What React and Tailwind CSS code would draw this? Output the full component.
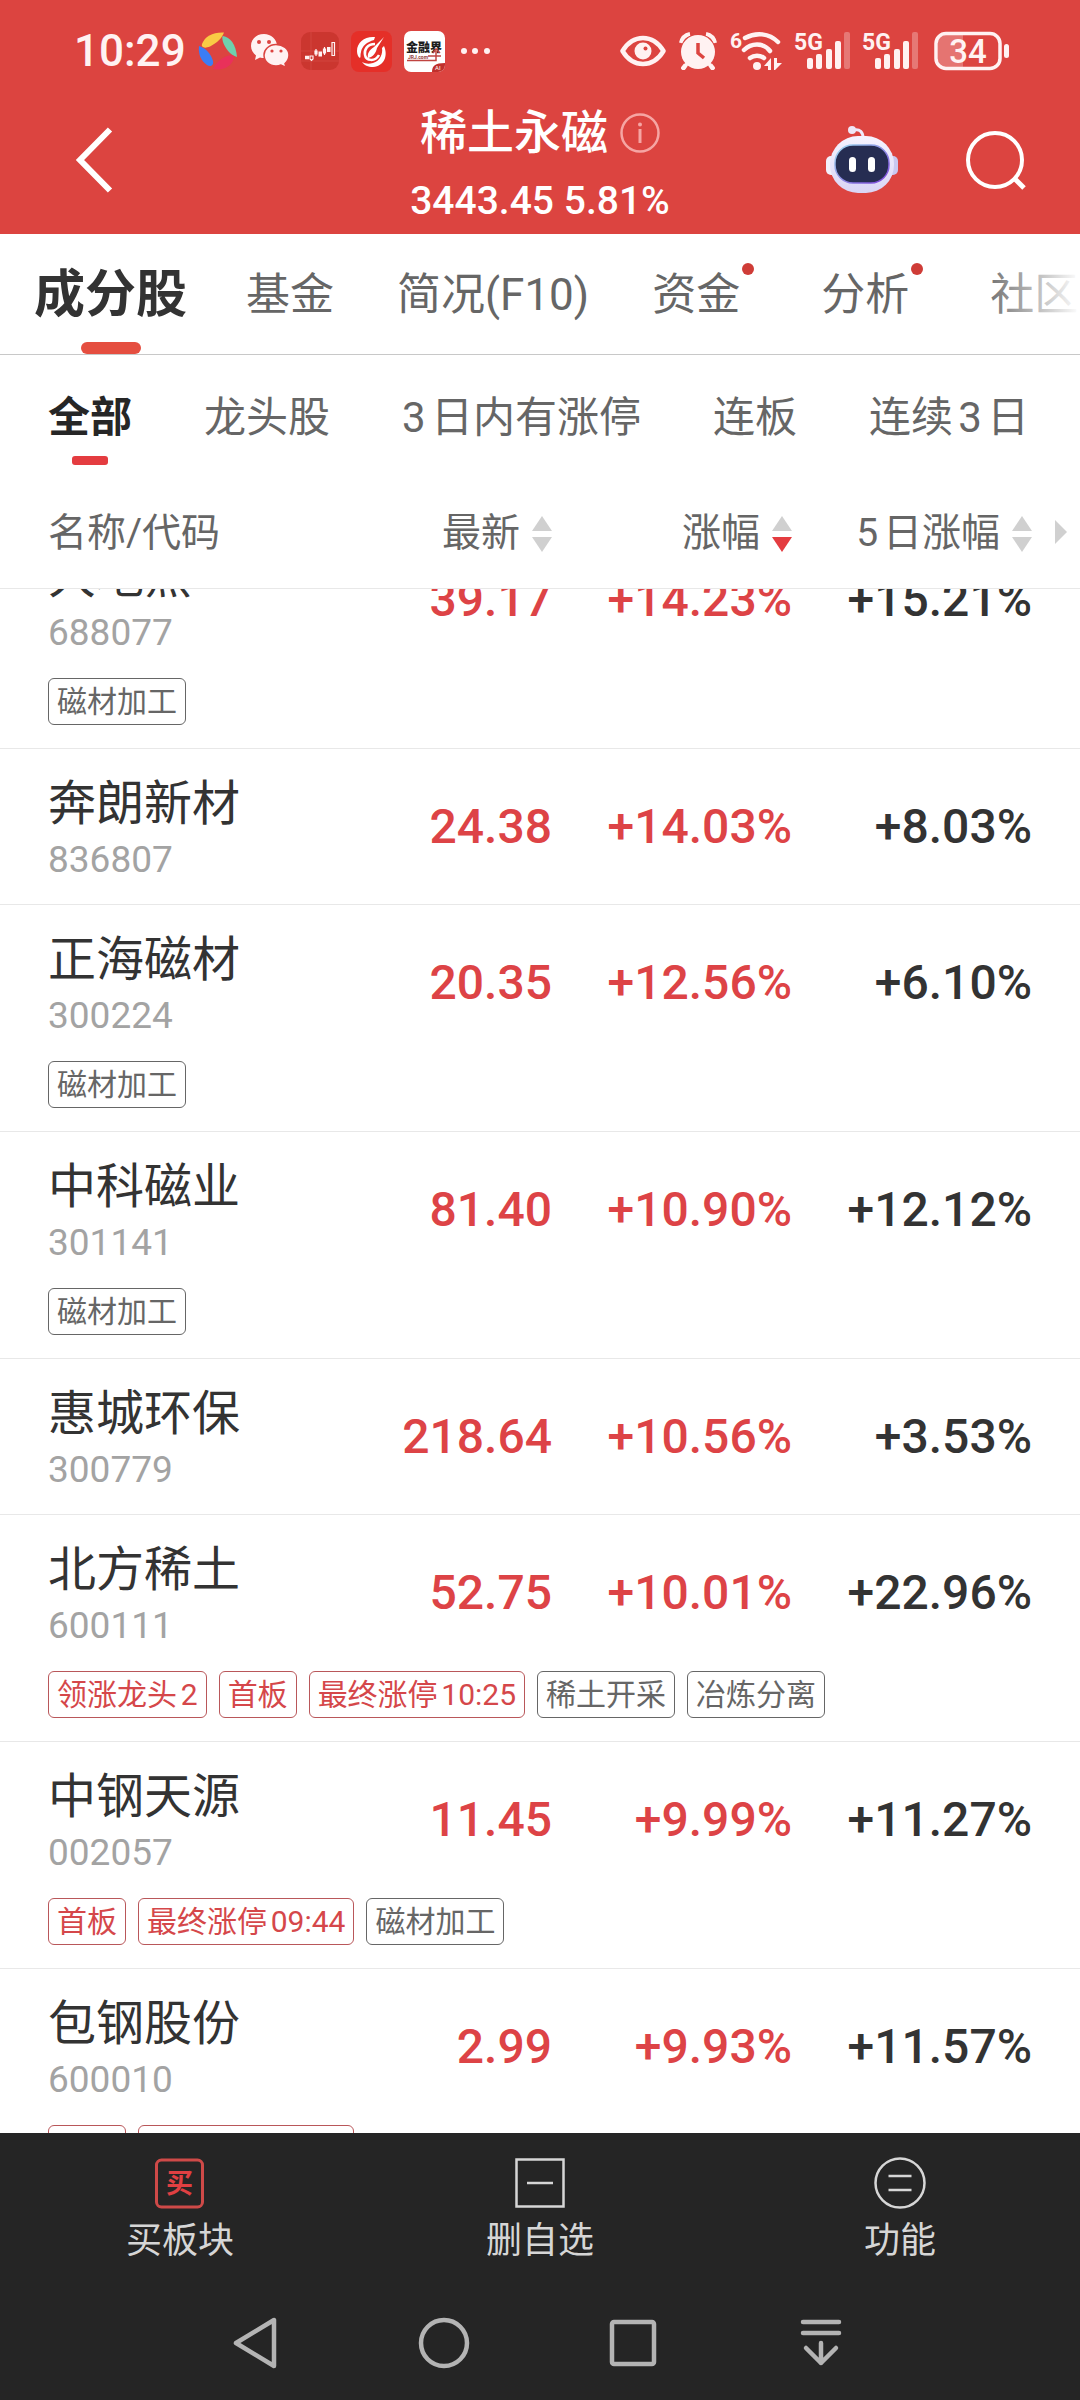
import React, { useEffect, useRef, useState } from 'react';

const stocks = [
  { name: '大地熊', code: '688077', price: '39.17', change: '+14.23%', change5: '+15.21%', tags: [{ text: '磁材加工' }] },
  { name: '奔朗新材', code: '836807', price: '24.38', change: '+14.03%', change5: '+8.03%', tags: [] },
  { name: '正海磁材', code: '300224', price: '20.35', change: '+12.56%', change5: '+6.10%', tags: [{ text: '磁材加工' }] },
  { name: '中科磁业', code: '301141', price: '81.40', change: '+10.90%', change5: '+12.12%', tags: [{ text: '磁材加工' }] },
  { name: '惠城环保', code: '300779', price: '218.64', change: '+10.56%', change5: '+3.53%', tags: [] },
  {
    name: '北方稀土', code: '600111', price: '52.75', change: '+10.01%', change5: '+22.96%',
    tags: [
      { text: '领涨龙头2', hot: true },
      { text: '首板', hot: true },
      { text: '最终涨停10:25', hot: true },
      { text: '稀土开采' },
      { text: '冶炼分离' },
    ],
  },
  {
    name: '中钢天源', code: '002057', price: '11.45', change: '+9.99%', change5: '+11.27%',
    tags: [{ text: '首板', hot: true }, { text: '最终涨停09:44', hot: true }, { text: '磁材加工' }],
  },
  {
    name: '包钢股份', code: '600010', price: '2.99', change: '+9.93%', change5: '+11.57%',
    tags: [{ text: '首板', hot: true }, { text: '最终涨停09:42', hot: true }],
  },
];

const tabs = [
  { label: '成分股' },
  { label: '基金' },
  { label: '简况(F10)' },
  { label: '资金', dot: true },
  { label: '分析', dot: true },
  { label: '社区' },
];

const filters = ['全部', '龙头股', '3日内有涨停', '连板', '连续3日'];

const Signal = () => (
  <svg width="56" height="50" viewBox="0 -6 56 50" fill="#fff2f2">
    <text x="0" y="18" fontSize="23" fontWeight="700">5G</text>
    <rect x="13" y="26" width="6" height="11" rx="2" />
    <rect x="22" y="22" width="6" height="15" rx="2" />
    <rect x="32" y="17" width="6" height="20" rx="2" />
    <rect x="41" y="9" width="6" height="28" rx="2" />
    <rect x="50" y="0" width="6" height="37" rx="2" opacity="0.3" />
  </svg>
);

const StatusBar = () => (
  <div className="flex h-[102px] items-center justify-between pl-[74px] pr-[70px] text-[#fff2f2]">
    <div className="flex items-center gap-3">
      <span className="text-[44px] font-medium leading-none">10:29</span>
      <svg width="40" height="40" viewBox="0 0 40 40">
        <path d="M4 13C7 5 15 1 26 1.500C24 7 19 12 12 15.500C6 18 3 16 4 13Z" fill="#f9cb45" />
        <path d="M25 5C32 6 38 13 39 26C32 24 27 17 25 11C24 7 24 5 25 5Z" fill="#6fd0ae" />
        <path d="M1 15C8 17 13 23 15 30C16 35 12 36 9 34C3 30 0 23 1 15Z" fill="#3b7df5" />
        <path d="M36 26C35 34 27 40 15 38C18 32 23 27 29 25C33 24 36 24 36 26Z" fill="#e9315a" />
      </svg>
      <svg width="39" height="36" viewBox="0 0 39 36">
        <path d="M14 1C6 1 1 6.500 1 13C1 17 3 20 6 22.500L5 27L10 24.500C11 25 13 25 15 25C23 25 27 19 27 13C27 6 21 1 14 1Z" fill="#fff2f2" />
        <path d="M26 11.500C19 11.500 14 16.500 14 22C14 28 19 33 26 33C28 33 30 32.500 31 32L36 34.500L35 30.500C37.500 28.500 39 25.500 39 22C39 16 33 11.500 26 11.500Z" fill="#fff2f2" stroke="#dc4440" strokeWidth="1.500" />
        <g fill="#dc4440">
          <circle cx="9" cy="9" r="2" />
          <circle cx="19" cy="9" r="2" />
          <circle cx="22" cy="18" r="1.600" />
          <circle cx="31" cy="18" r="1.600" />
        </g>
      </svg>
      <svg width="38" height="38" viewBox="0 0 38 38">
        <rect width="38" height="38" rx="9" fill="#cb362f" />
        <path d="M10 0V38M0 19H38M0 29H38" stroke="#d2453f" strokeWidth="1" />
        <g stroke="#fff2f2" strokeWidth="1.200">
          <path d="M4 25.500H8" strokeWidth="3.500" />
          <path d="M9 24H12V27L10.500 28.500L9 27ZM14 19H16V22H14ZM15 17V24M22.500 17H24.500V21H22.500ZM23.500 15V23M31 10.500H33.500V23.500H31Z" fill="none" />
          <path d="M17.500 22H21" strokeWidth="5" />
          <path d="M26 17.500H29.500" strokeWidth="5" />
        </g>
      </svg>
      <svg width="41" height="41" viewBox="0 0 41 41">
        <rect width="41" height="41" rx="8" fill="#e52f28" />
        <path d="M24 6C14 5 6 11 6 20C6 23 7 26 9 27C10 26 9 24 10 21C11 15 16 11 23 9Z" fill="#fff" />
        <path d="M33 15C37 24 34 35 22 36C17 36 13 34 11 31C15 33 18 33 22 32C29 30 32 23 31 17Z" fill="#fff" />
        <path d="M24 13C16 13 13 19 14 24C15 30 24 31 28 24" fill="none" stroke="#fff" strokeWidth="2.500" />
        <path d="M33 6L23 16C18 19 16 23 17 27C22 26 25 22 26 17Z" fill="#fff" />
      </svg>
      <svg width="41" height="41" viewBox="0 0 41 41">
        <defs>
          <clipPath id="appTile"><rect width="41" height="41" rx="7" /></clipPath>
        </defs>
        <g clipPath="url(#appTile)">
          <rect width="41" height="41" fill="#fff" />
          <text x="2" y="21" fontSize="12" fontWeight="900" fill="#1d1d1d">金融界</text>
          <text x="4" y="28" fontSize="5" fontWeight="700" fill="#8f3a36">JRJ.com</text>
          <path d="M3 29.500H32V20M29 22L32 18L36 22M24 25H37" fill="none" stroke="#c04440" strokeWidth="1.500" />
          <path d="M28 41C28 35 31 32 41 32V41Z" fill="#c0302c" />
          <text x="31" y="39" fontSize="6" fill="#fff">AI</text>
        </g>
      </svg>
      <svg width="40" height="8" viewBox="0 0 40 8" fill="#fff2f2">
        <circle cx="7" cy="4" r="3" />
        <circle cx="18" cy="4" r="3" />
        <circle cx="30" cy="4" r="3" />
      </svg>
    </div>
    <div className="flex items-center gap-3">
      <svg width="46" height="32" viewBox="0 0 46 32" fill="none">
        <path d="M2.500 16C8 7 15 3 23 3S38 7 43.500 16C38 25 31 29 23 29S8 25 2.500 16Z" stroke="#fff2f2" strokeWidth="4.500" strokeLinejoin="round" />
        <circle cx="23" cy="16" r="8.500" fill="#fff2f2" />
        <circle cx="25.500" cy="13.500" r="2" fill="#dc4440" />
      </svg>
      <svg width="40" height="38" viewBox="0 0 40 38" fill="none">
        <path d="M3 11C4 6 7 3 12 2M37 11C36 6 33 3 28 2" stroke="#fff2f2" strokeWidth="4" />
        <path d="M9 31L5 36M31 31L35 36" stroke="#fff2f2" strokeWidth="4" strokeLinecap="round" />
        <circle cx="20" cy="20" r="18" fill="#dc4440" />
        <circle cx="20" cy="20" r="17" fill="#fff2f2" />
        <path d="M8 33L6 36M32 33L34 36" stroke="#fff2f2" strokeWidth="4" strokeLinecap="round" />
        <path d="M20 11V21L26 26" stroke="#dc4440" strokeWidth="3.500" />
      </svg>
      <svg width="52" height="50" viewBox="0 -5 52 50" fill="none" stroke="#fff2f2">
        <text x="0" y="17" fontSize="21" fontWeight="700" fill="#fff2f2" stroke="none">6</text>
        <path d="M15 7C26 1 39 2 48 11M14 19C21 12 33 11 40 20M20 27C24 24 30 24 34 27" strokeWidth="4.500" strokeLinecap="round" />
        <circle cx="27" cy="35" r="4" fill="#fff2f2" stroke="none" />
        <path d="M41 39V27L34 35H38V39ZM44 39V27H47V32H52L45 39Z" fill="#fff2f2" stroke="none" />
      </svg>
      <Signal />
      <Signal />
      <svg width="76" height="40" viewBox="0 0 76 40" className="ml-1">
        <path d="M4 10Q4 4 12 4H29V36H12Q4 36 4 30Z" fill="#fff2f2" opacity="0.28" />
        <rect x="2" y="2.500" width="64" height="35" rx="10" fill="none" stroke="#fff2f2" strokeWidth="3.500" />
        <rect x="70" y="13" width="5" height="14" rx="2.500" fill="#fff2f2" />
        <text x="34" y="32" fontSize="33" fontWeight="500" textAnchor="middle" fill="#fff2f2">34</text>
      </svg>
    </div>
  </div>
);

const Robot = () => (
  <svg width="72" height="68" viewBox="0 0 72 68">
    <defs>
      <linearGradient id="robotShell" x1="0" y1="0" x2="0" y2="1">
        <stop offset="0" stopColor="#f6f3ff" />
        <stop offset="1" stopColor="#d9d5f5" />
      </linearGradient>
      <linearGradient id="robotRim" x1="0" y1="0" x2="1" y2="1">
        <stop offset="0" stopColor="#9fdcf0" />
        <stop offset="1" stopColor="#7a3fd8" />
      </linearGradient>
    </defs>
    <path d="M28 4C34 3 37 6 37 12" fill="none" stroke="#efe9fb" strokeWidth="3" />
    <circle cx="26" cy="4" r="4" fill="#efe6f6" />
    <rect x="0" y="30" width="12" height="19" rx="5" fill="#f2f1fc" />
    <rect x="60" y="30" width="12" height="19" rx="5" fill="#c9c8f0" />
    <rect x="4" y="10" width="64" height="57" rx="28" fill="url(#robotShell)" />
    <rect x="9" y="19" width="54" height="38" rx="18" fill="#262d52" stroke="url(#robotRim)" strokeWidth="1.500" />
    <rect x="23" y="31" width="7" height="15" rx="3.500" fill="#fff" />
    <rect x="42" y="31" width="7" height="15" rx="3.500" fill="#fff" />
  </svg>
);

const Header = () => (
  <div className="grid grid-cols-[1fr_auto_1fr]">
    <div className="flex items-center pb-4 pl-[75px]">
      <button aria-label="返回">
        <svg width="40" height="66" viewBox="0 0 40 66" fill="none" stroke="#fff" strokeWidth="6">
          <path d="M35 2.500L5 33L35 63.500" />
        </svg>
      </button>
    </div>
    <div className="flex flex-col items-center gap-4 pb-[10px] pt-[2px] text-white">
      <div className="flex items-center gap-3">
        <h1 className="text-[47px] font-medium leading-[58px]">稀土永磁</h1>
        <button aria-label="说明">
          <svg width="40" height="40" viewBox="0 0 40 40" fill="none" stroke="#f6a5a3">
            <circle cx="20" cy="20" r="18.500" strokeWidth="2.500" />
            <path d="M20 16V30" strokeWidth="3" />
            <circle cx="20" cy="11.500" r="2" fill="#f6a5a3" stroke="none" />
          </svg>
        </button>
      </div>
      <p className="text-[39px] font-medium leading-[46px]">3443.45 5.81%</p>
    </div>
    <div className="flex items-center justify-end gap-[68px] pb-4 pr-[54px]">
      <button aria-label="智能助手"><Robot /></button>
      <button aria-label="搜索">
        <svg width="60" height="60" viewBox="0 0 60 60" fill="none" stroke="#fff" strokeWidth="4">
          <circle cx="29" cy="30" r="27" />
          <path d="M48 48L58 58" strokeWidth="5" />
        </svg>
      </button>
    </div>
  </div>
);

const SortIcon = ({ active }) => (
  <svg width="20" height="36" viewBox="0 0 20 36">
    <path d="M10 0L20 15H0Z" fill="#d0d0d0" />
    <path d="M0 21H20L10 36Z" fill={active ? '#e43c40' : '#d0d0d0'} />
  </svg>
);

const SortHeader = ({ label, active }) => (
  <th className="border-b border-[#e8e8e8] bg-white p-0 pt-1 font-normal">
    <button className="flex w-full items-center justify-end gap-3 whitespace-nowrap">
      {label}
      <SortIcon active={active} />
    </button>
  </th>
);

const Tag = ({ text, hot }) => (
  <span
    className={`rounded-md border px-2 text-[30px] leading-[45px] ${
      hot ? 'border-[#b9575a] text-[#d5474a]' : 'border-[#666666] text-[#666666]'
    }`}
  >
    {text}
  </span>
);

const StockRow = ({ stock }) => {
  const hasTags = stock.tags.length > 0;
  const line = hasTags ? '' : 'border-b border-[#e8e8e8]';

  return (
    <tbody>
      <tr className="h-[156px] text-right text-[48px] leading-[60px]">
        <td className={`pb-0 pl-12 pr-0 pt-[6px] text-left ${line}`}>
          <div className="text-[#333333]">{stock.name}</div>
          <div className="text-[37px] leading-[52px] text-[#a3a3a3]">{stock.code}</div>
        </td>
        <td className={`p-0 font-medium text-[#dd4346] ${line}`}>{stock.price}</td>
        <td className={`p-0 font-medium text-[#dd4346] ${line}`}>{stock.change}</td>
        <td className={`p-0 font-medium text-[#333333] ${line}`}>{stock.change5}</td>
        <td className={`p-0 ${line}`}></td>
      </tr>
      {hasTags && (
        <tr>
          <td colSpan={5} className="border-b border-[#e8e8e8] pb-[23px] pl-12 pt-0">
            <div className="flex gap-3 whitespace-nowrap">
              {stock.tags.map((tag) => (
                <Tag key={tag.text} text={tag.text} hot={tag.hot} />
              ))}
            </div>
          </td>
        </tr>
      )}
    </tbody>
  );
};

const ActionButton = ({ label, children }) => (
  <button className="flex flex-1 flex-col items-center gap-[10px] pt-6 text-[36px] leading-[44px] text-[#d6d6d6]">
    {children}
    {label}
  </button>
);

const NavButton = ({ label, children }) => (
  <button aria-label={label} className="flex flex-1 items-center justify-center">
    <svg width="52" height="52" viewBox="0 0 52 52" fill="none" stroke="#b4b4b4" strokeWidth="4.500" strokeLinecap="round" strokeLinejoin="round">
      {children}
    </svg>
  </button>
);

const App = () => {
  const listRef = useRef(null);
  const [activeTab, setActiveTab] = useState('成分股');
  const [activeFilter, setActiveFilter] = useState('全部');

  useEffect(() => {
    listRef.current.scrollTop = 67;
  }, []);

  return (
    <div className="flex h-screen flex-col overflow-hidden bg-white font-['Roboto','Noto_Sans_CJK_SC',sans-serif] [text-autospace:normal]">
      <header className="bg-[#dc4440]">
        <StatusBar />
        <Header />
      </header>

      {/* Main tabs */}
      <nav className="relative flex h-[121px] shrink-0 gap-[63px] overflow-hidden whitespace-nowrap border-b border-[#c8c8c8] pl-[34px]">
        {tabs.map((tab) => {
          const active = tab.label === activeTab;
          return (
            <button
              key={tab.label}
              onClick={() => setActiveTab(tab.label)}
              className={`relative shrink-0 pt-[2px] ${
                active ? '-mr-1 text-[51px] font-bold text-[#333333]' : 'text-[44px] text-[#666666]'
              } ${tab.dot ? 'pr-[18px]' : ''}`}
            >
              {tab.label}
              {tab.dot && <span className="absolute right-1 top-[29px] size-3 rounded-full bg-[#cf3c37]"></span>}
              {active && (
                <span className="absolute bottom-0 left-1/2 h-3 w-[60px] -translate-x-1/2 rounded-full bg-[#e54e40]"></span>
              )}
            </button>
          );
        })}
        <div className="pointer-events-none absolute inset-y-0 right-0 w-[100px] bg-linear-to-r from-transparent to-white"></div>
      </nav>

      {/* Filters */}
      <nav className="flex h-[120px] shrink-0 gap-[72px] overflow-hidden whitespace-nowrap pl-12">
        {filters.map((filter) => {
          const active = filter === activeFilter;
          return (
            <button
              key={filter}
              onClick={() => setActiveFilter(filter)}
              className={`relative shrink-0 pt-1 text-[42px] ${active ? 'font-bold text-[#262626]' : 'text-[#666666]'}`}
            >
              {filter}
              {active && (
                <span className="absolute bottom-[10px] left-1/2 h-[9px] w-9 -translate-x-1/2 rounded-[3px] bg-[#e43c40]"></span>
              )}
            </button>
          );
        })}
      </nav>

      {/* Stock list */}
      <main ref={listRef} className="min-h-0 flex-1 overflow-y-auto [scrollbar-width:none]">
        <table className="w-full table-fixed border-separate border-spacing-0">
          <colgroup>
            <col />
            <col className="w-60" />
            <col className="w-60" />
            <col className="w-60" />
            <col className="w-12" />
          </colgroup>
          <thead className="sticky top-0 z-10">
            <tr className="h-[114px] text-[39px] text-[#666666]">
              <th className="border-b border-[#e8e8e8] bg-white pb-0 pl-12 pt-1 text-left font-normal">名称/代码</th>
              <SortHeader label="最新" />
              <SortHeader label="涨幅" active />
              <SortHeader label="5日涨幅" />
              <th className="border-b border-[#e8e8e8] bg-white py-0 pl-[23px]">
                <svg width="12" height="24" viewBox="0 0 12 24">
                  <path d="M0 0L12 12L0 24Z" fill="#d0d0d0" />
                </svg>
              </th>
            </tr>
          </thead>
          {stocks.map((stock) => (
            <StockRow key={stock.code} stock={stock} />
          ))}
        </table>
      </main>

      <footer className="shrink-0 bg-[#252525]">
        <div className="flex h-[152px] items-start">
          <ActionButton label="买板块">
            <svg width="52" height="52" viewBox="0 0 52 52">
              <rect x="2.500" y="3" width="46" height="47" rx="5" fill="none" stroke="#cf4a48" strokeWidth="3" />
              <text x="25.500" y="36" fontSize="27" fontWeight="700" textAnchor="middle" fill="#e04042">买</text>
            </svg>
          </ActionButton>
          <ActionButton label="删自选">
            <svg width="52" height="52" viewBox="0 0 52 52" fill="none" stroke="#d6d6d6" strokeWidth="2.500">
              <rect x="2.500" y="2.500" width="47" height="47" />
              <path d="M13 26H39" />
            </svg>
          </ActionButton>
          <ActionButton label="功能">
            <svg width="52" height="52" viewBox="0 0 52 52" fill="none" stroke="#d6d6d6" strokeWidth="2.500">
              <circle cx="26" cy="26" r="24.500" />
              <path d="M14.500 19H37.500M14.500 33H37.500" />
            </svg>
          </ActionButton>
        </div>
        <div className="flex h-[115px] pl-40 pr-[164px]">
          <NavButton label="返回">
            <path d="M45 3V49L7 26Z" />
          </NavButton>
          <NavButton label="主页">
            <circle cx="26" cy="26" r="23" />
          </NavButton>
          <NavButton label="最近任务">
            <rect x="5" y="5" width="42" height="42" rx="2" />
          </NavButton>
          <NavButton label="收起">
            <path d="M7 5H43M7 16H43M25 26V46M10 31L25 46L40 31" />
          </NavButton>
        </div>
      </footer>
    </div>
  );
};

export default App;
